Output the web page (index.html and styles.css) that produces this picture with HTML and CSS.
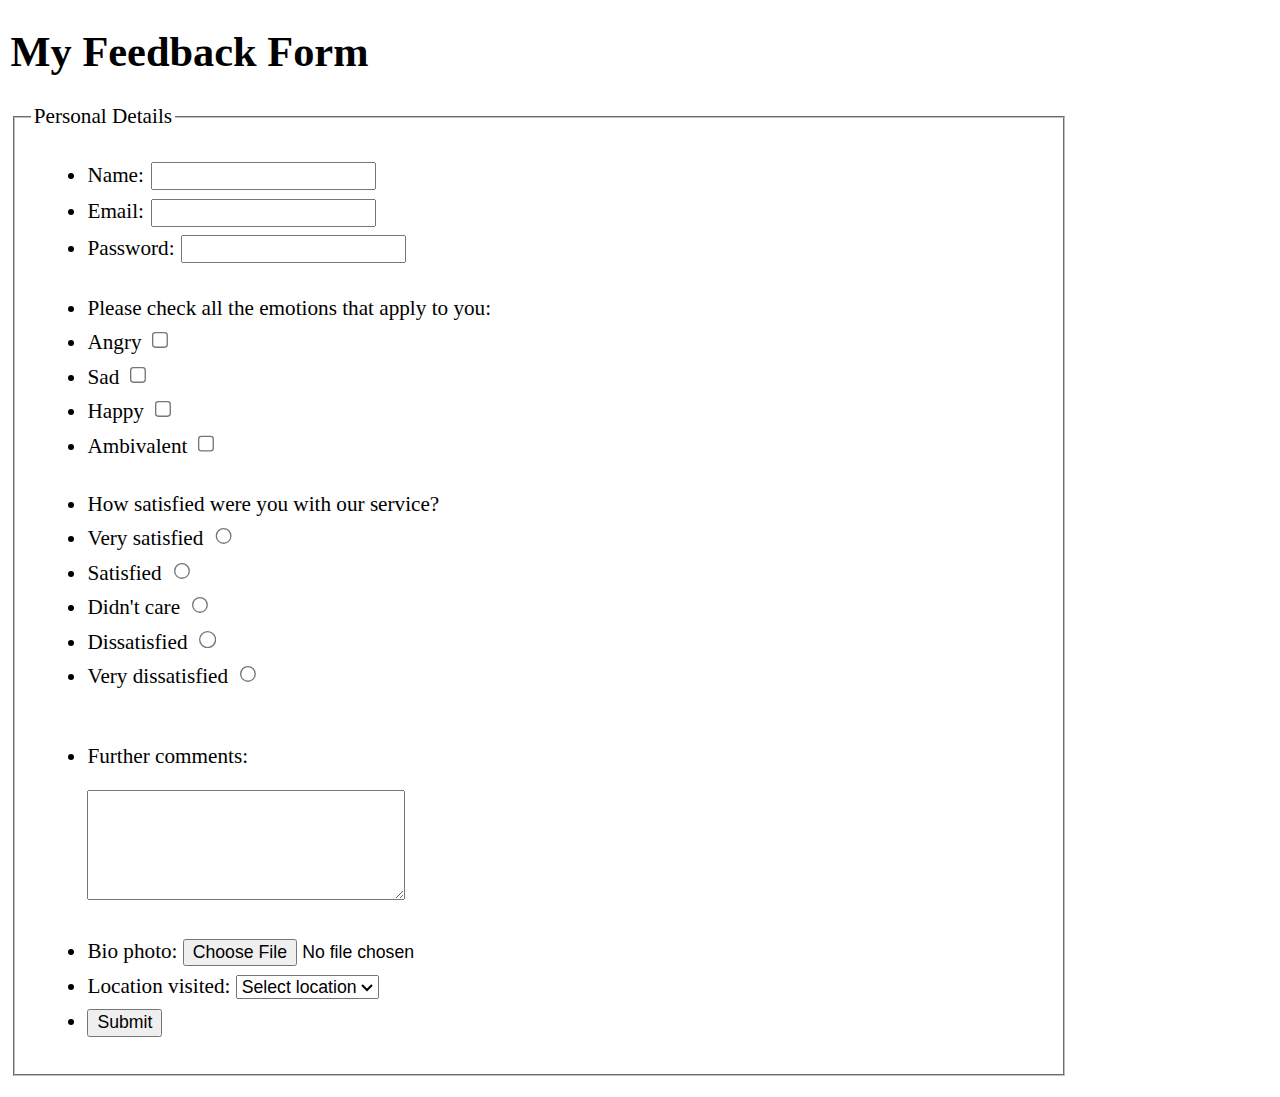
FILE: index.html
```html
<!DOCTYPE html>
<html lang="en" class="page">
<head>
<meta charset="utf-8">
<title>My Feedback Form</title>
<link rel="stylesheet" href="styles.css">
</head>
<body class="page-body">
<h1 class="title">My Feedback Form</h1>
<form class="feedback">
  <fieldset class="details">
    <legend class="details-legend">Personal Details</legend>
    <ul class="list list-text">
      <li class="row row-text"><label for="name">Name:</label> <input class="text-field" id="name" type="text"></li>
      <li class="row row-text"><label for="email">Email:</label> <input class="text-field" id="email" type="email"></li>
      <li class="row row-text"><label for="password">Password:</label> <input class="text-field" id="password" type="password"></li>
    </ul>
    <ul class="list list-check">
      <li class="row">Please check all the emotions that apply to you:</li>
      <li class="row"><label for="angry">Angry</label> <input class="check" id="angry" type="checkbox"></li>
      <li class="row"><label for="sad">Sad</label> <input class="check" id="sad" type="checkbox"></li>
      <li class="row"><label for="happy">Happy</label> <input class="check" id="happy" type="checkbox"></li>
      <li class="row"><label for="ambivalent">Ambivalent</label> <input class="check" id="ambivalent" type="checkbox"></li>
    </ul>
    <ul class="list list-radio">
      <li class="row">How satisfied were you with our service?</li>
      <li class="row"><label for="vs">Very satisfied</label> <input class="radio" id="vs" type="radio" name="sat"></li>
      <li class="row"><label for="s">Satisfied</label> <input class="radio" id="s" type="radio" name="sat"></li>
      <li class="row"><label for="dc">Didn't care</label> <input class="radio" id="dc" type="radio" name="sat"></li>
      <li class="row"><label for="d">Dissatisfied</label> <input class="radio" id="d" type="radio" name="sat"></li>
      <li class="row"><label for="vd">Very dissatisfied</label> <input class="radio" id="vd" type="radio" name="sat"></li>
    </ul>
    <ul class="list list-comments">
      <li class="row"><label for="comments">Further comments:</label>
        <div class="comment-box"><textarea class="comments" id="comments"></textarea></div>
      </li>
    </ul>
    <ul class="list list-extra">
      <li class="row row-extra"><label for="photo">Bio photo:</label> <input class="file" id="photo" type="file"></li>
      <li class="row row-extra"><label for="location">Location visited:</label> <select class="location" id="location"><option>Select location</option><option>London</option><option>Paris</option></select></li>
      <li class="row row-extra"><button class="submit" type="submit">Submit</button></li>
    </ul>
  </fieldset>
</form>
</body>
</html>
```
FILE: styles.css
```css
.page {
  zoom: 1.325;
}

.page-body {
  margin: 8px;
  font-family: "Liberation Serif", "Times New Roman", serif;
  font-size: 16px;
  color: #000;
  background: #fff;
}

.title {
  font-size: 32px;
  font-weight: bold;
  margin: 12.4px 0 21.4px;
}

.feedback {
  margin: 0;
}

.details {
  box-sizing: border-box;
  width: 794px;
  margin: 0 2px;
  padding: 5.6px 12px 10px;
  border: 2px groove rgb(192, 192, 192);
}

.details-legend {
  padding: 0 2px;
}

.list {
  margin: 0;
  padding-left: 42.5px;
  list-style: disc;
}

.list-text {
  margin-top: 15.2px;
}

.list-check {
  margin-top: 18.6px;
}

.list-radio {
  margin-top: 17.9px;
}

.list-comments {
  margin-top: 34.2px;
}

.list-extra {
  margin-top: 25.6px;
  margin-bottom: 16px;
}

.row {
  line-height: 26px;
}

.row-text {
  line-height: 27.5px;
}

.row-extra {
  line-height: 26.5px;
}

.text-field {
  box-sizing: border-box;
  width: 170px;
  height: 21px;
  margin-left: 1px;
  font-family: "Liberation Sans", Arial, sans-serif;
  font-size: 13.333px;
}

.check {
  width: 13px;
  height: 13px;
  margin: 2px 3px 3px 4px;
}

.radio {
  width: 13px;
  height: 13px;
}

.comment-box {
  margin-top: 12.7px;
  line-height: normal;
}

.comments {
  display: block;
  box-sizing: border-box;
  width: 240px;
  height: 83px;
  margin: 0;
  font-family: "Liberation Mono", monospace;
  font-size: 13.333px;
}

.file,
.location,
.submit {
  font-family: "Liberation Sans", Arial, sans-serif;
  font-size: 13.333px;
}
```
